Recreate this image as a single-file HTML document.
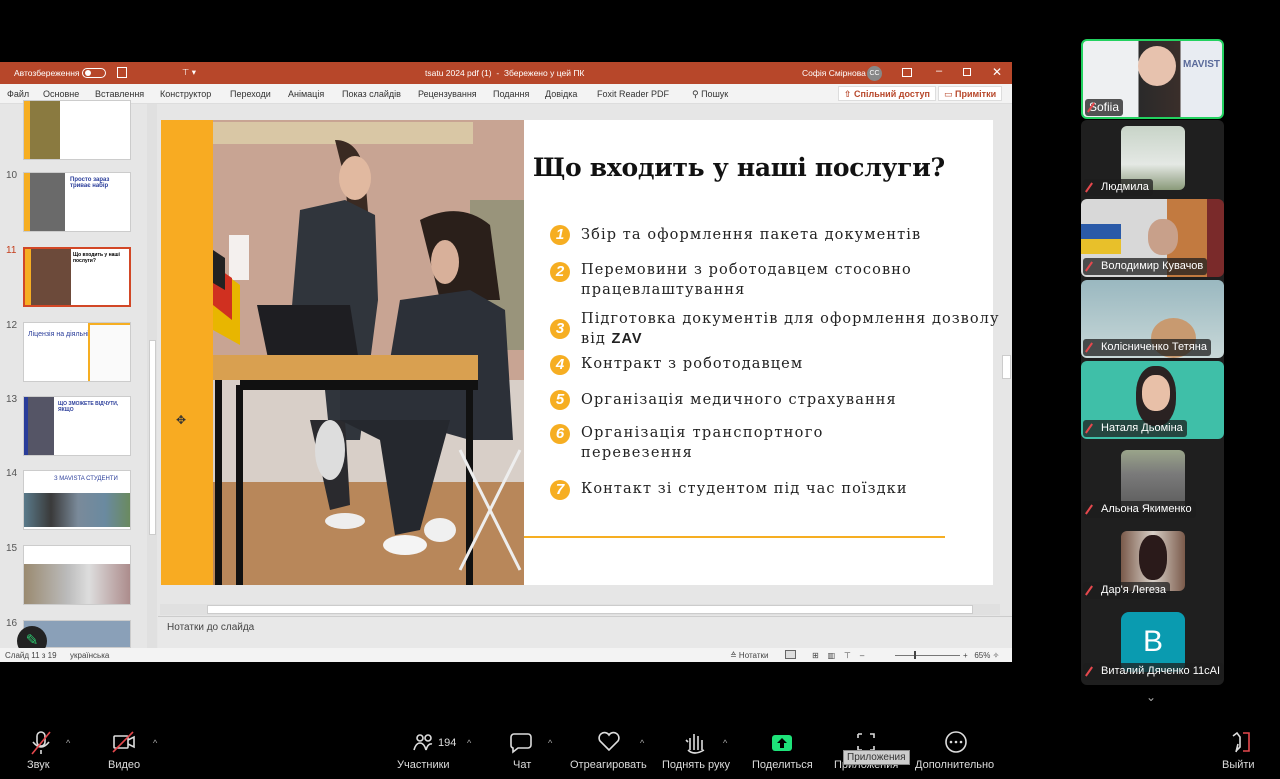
<!DOCTYPE html>
<html><head><meta charset="utf-8">
<style>
*{margin:0;padding:0;box-sizing:border-box}
body{width:1280px;height:779px;background:#000;position:relative;overflow:hidden;font-family:"Liberation Sans","DejaVu Sans",sans-serif}
.a{position:absolute}
.tb{left:0;top:62px;width:1012px;height:22px;background:#b7472a;color:#fff;font-size:8.5px}
.rb{left:0;top:84px;width:1012px;height:20px;background:#f3f3f3;font-size:9px;color:#333;border-bottom:1px solid #ddd}
.rb span{position:absolute;top:5px}
.main{left:0;top:104px;width:1012px;height:544px;background:#e6e6e6}
.thumb{position:absolute;left:23px;width:108px;height:60px;background:#fff;border:1px solid #ccc;overflow:hidden}
.num{position:absolute;left:6px;font-size:10px;color:#555}
.slide{left:161px;top:120px;width:832px;height:465px;background:#fff}
.li{position:absolute;left:581px;font-family:"DejaVu Serif","Liberation Serif",serif;font-size:14.5px;color:#222;letter-spacing:1.1px;line-height:20px}
.bul{position:absolute;left:550px;width:20px;height:20px;border-radius:50%;background:#f6ae22;color:#fff;font:bold italic 15px "Liberation Sans",sans-serif;text-align:center;line-height:20px}
.tile{position:absolute;left:1081px;width:143px;height:78px;background:#222;border-radius:6px;overflow:hidden}
.nm{position:absolute;left:2px;bottom:2px;height:17px;padding:0 4px 0 18px;background:rgba(30,30,30,.75);color:#fff;font-size:11px;line-height:17px;border-radius:3px;white-space:nowrap}
.nm:before{content:"";position:absolute;left:5px;top:3px;width:2px;height:11px;background:#e5484d;transform:rotate(35deg)}
.tl{position:absolute;color:#ddd;font-size:11px;top:759px;text-align:center}
</style></head><body>

<div class="a tb">
 <span class="a" style="left:14px;top:6px">Автозбереження</span>
 <span class="a" style="left:82px;top:6px;width:24px;height:10px;border:1px solid #fff;border-radius:6px"></span>
 <span class="a" style="left:85px;top:8px;width:6px;height:6px;border-radius:50%;background:#fff"></span>
 <span class="a" style="left:117px;top:5px;width:10px;height:11px;border:1px solid #fff"></span>
 <span class="a" style="left:182px;top:5px">⊤ ▾</span>
 <span class="a" style="left:425px;top:6px">tsatu 2024 pdf (1) &nbsp;-&nbsp; Збережено у цей ПК</span>
 <span class="a" style="left:802px;top:6px">Софія Смірнова</span>
 <span class="a" style="left:867px;top:4px;width:15px;height:15px;border-radius:50%;background:#888;font-size:7px;text-align:center;line-height:15px">СС</span>
 <span class="a" style="left:902px;top:6px;width:10px;height:9px;border:1px solid #fff"></span>
 <span class="a" style="left:936px;top:3px;font-size:11px">–</span>
 <span class="a" style="left:963px;top:6px;width:8px;height:8px;border:1px solid #fff"></span>
 <span class="a" style="left:992px;top:3px;font-size:12px">✕</span>
</div>
<div class="a rb">
 <span style="left:7px">Файл</span><span style="left:43px">Основне</span><span style="left:95px">Вставлення</span><span style="left:160px">Конструктор</span><span style="left:230px">Переходи</span><span style="left:288px">Анімація</span><span style="left:342px">Показ слайдів</span><span style="left:418px">Рецензування</span><span style="left:493px">Подання</span><span style="left:545px">Довідка</span><span style="left:597px">Foxit Reader PDF</span><span style="left:692px">⚲ Пошук</span>
 <span style="left:838px;top:2px;height:15px;padding:2px 5px;background:#fff;border:1px solid #ddd;color:#b7472a;font-weight:bold">⇧ Спільний доступ</span>
 <span style="left:938px;top:2px;height:15px;padding:2px 5px;background:#fff;border:1px solid #ddd;color:#b7472a;font-weight:bold">▭ Примітки</span>
</div>

<div class="a main"></div>
<div class="a" style="left:147px;top:104px;width:10px;height:544px;background:#e0e0e0"></div>
<div class="a" style="left:149px;top:340px;width:7px;height:195px;background:#fff;border:1px solid #ccc"></div>
<div class="thumb" style="top:100px"><div class="a" style="left:0;top:0;width:6px;height:60px;background:#f6ae22"></div><div class="a" style="left:6px;top:0;width:30px;height:60px;background:#8a7a40"></div></div>
<div class="num" style="top:170px">10</div>
<div class="thumb" style="top:172px"><div class="a" style="left:0;top:0;width:6px;height:60px;background:#f6ae22"></div><div class="a" style="left:6px;top:0;width:35px;height:60px;background:#6a6a6a"></div><div class="a" style="left:46px;top:4px;font-size:6px;color:#2a3d9a;font-weight:bold">Просто зараз триває набір</div></div>
<div class="num" style="top:245px;color:#c43e1c">11</div>
<div class="thumb" style="top:247px;border:2px solid #d24726"><div class="a" style="left:0;top:0;width:6px;height:60px;background:#f6ae22"></div><div class="a" style="left:6px;top:0;width:40px;height:60px;background:#6c4a3a"></div><div class="a" style="left:48px;top:3px;font-size:5px;font-weight:bold">Що входить у наші послуги?</div></div>
<div class="num" style="top:320px">12</div>
<div class="thumb" style="top:322px"><div class="a" style="left:4px;top:8px;font-size:7px;color:#2a3d9a">Ліцензія на діяльність Mavista</div><div class="a" style="left:64px;top:0;width:44px;height:60px;border:2px solid #f6ae22;background:#fafafa"></div></div>
<div class="num" style="top:394px">13</div>
<div class="thumb" style="top:396px"><div class="a" style="left:0;top:0;width:4px;height:60px;background:#2a3d9a"></div><div class="a" style="left:4px;top:0;width:26px;height:60px;background:#556"></div><div class="a" style="left:34px;top:4px;font-size:5px;color:#2a3d9a;font-weight:bold">ЩО ЗМОЖЕТЕ ВІДЧУТИ, ЯКЩО</div></div>
<div class="num" style="top:468px">14</div>
<div class="thumb" style="top:470px"><div class="a" style="left:30px;top:5px;font-size:6px;color:#2a3d9a">З MAVISTA СТУДЕНТИ</div><div class="a" style="left:0;top:22px;width:108px;height:34px;background:linear-gradient(90deg,#5a7a8a,#3a3a3a,#7a8a9a,#6a8aa0,#6a8a5a)"></div></div>
<div class="num" style="top:543px">15</div>
<div class="thumb" style="top:545px"><div class="a" style="left:0;top:18px;width:108px;height:42px;background:linear-gradient(90deg,#9a8a70,#bbb 40%,#ddd 60%,#a88)"></div></div>
<div class="num" style="top:618px">16</div>
<div class="thumb" style="top:620px;height:28px;background:#8aa0b8"></div>
<div class="a" style="left:17px;top:626px;width:30px;height:30px;border-radius:50%;background:#222;color:#2ecc71;font-size:15px;text-align:center;line-height:30px">✎</div>

<div class="a slide"></div>
<div class="a" style="left:161px;top:120px;width:52px;height:465px;background:#f8ab22"></div>
<svg class="a" style="left:213px;top:120px" width="311" height="465" viewBox="213 120 311 465">
 <rect x="213" y="120" width="311" height="465" fill="#c8a493"/>
 <rect x="213" y="380" width="311" height="120" fill="#d8cfc8"/>
 <rect x="213" y="482" width="311" height="103" fill="#b8875a"/>
 <rect x="213" y="122" width="260" height="22" fill="#d9c7a5"/>
 <rect x="470" y="200" width="54" height="150" fill="#7a8a6a" opacity=".6"/>
 <rect x="229" y="235" width="20" height="45" fill="#f4f0ee"/>
 <path d="M213 265 L240 285 L240 345 L213 330Z" fill="#e8b600"/>
 <path d="M213 265 L232 278 L232 320 L213 305Z" fill="#d03020"/>
 <path d="M213 250 L225 258 L225 290 L213 283Z" fill="#222"/>
 <path d="M335 140 Q360 140 365 175 L372 260 L352 260 L345 180Z" fill="#3a2a22"/>
 <ellipse cx="355" cy="178" rx="16" ry="22" fill="#e1b9a0"/>
 <path d="M300 210 L345 200 L375 215 L378 300 L360 440 L330 440 L320 340 L290 330 Z" fill="#30353c"/>
 <path d="M310 420 L345 420 L350 505 L330 510Z" fill="#2a2a2e"/>
 <ellipse cx="330" cy="450" rx="15" ry="30" fill="#ddd"/>
 <ellipse cx="345" cy="521" rx="20" ry="8" fill="#eee"/>
 <path d="M420 220 Q460 200 490 225 L500 300 L440 300Z" fill="#2a1f1a"/>
 <ellipse cx="445" cy="262" rx="14" ry="22" fill="#d8b09a"/>
 <path d="M400 300 L470 290 L505 310 L513 440 L470 440 L400 420 L340 420 L340 380 L390 360Z" fill="#2c3038"/>
 <path d="M340 420 L450 420 L420 530 L395 535 L380 440 Z" fill="#25282e"/>
 <ellipse cx="405" cy="545" rx="22" ry="10" fill="#f4f4f4"/>
 <ellipse cx="440" cy="530" rx="16" ry="12" fill="#f0f0f0"/>
 <path d="M257 305 L350 305 L360 368 L270 368Z" fill="#1e1e22"/>
 <rect x="213" y="355" width="265" height="25" fill="#d9a050"/>
 <rect x="240" y="380" width="238" height="10" fill="#111"/>
 <rect x="215" y="380" width="7" height="205" fill="#111"/>
 <rect x="236" y="385" width="7" height="200" fill="#111"/>
 <rect x="466" y="385" width="7" height="200" fill="#111"/>
 <path d="M460 450 L520 570 M520 450 L460 570" stroke="#eee" stroke-width="3"/>
</svg>
<div class="a" style="left:176px;top:413px;font-size:12px;color:#333">✥</div>

<div class="a" style="left:533px;top:153px;font-family:'DejaVu Serif','Liberation Serif',serif;font-weight:bold;font-size:25px;color:#111;letter-spacing:-0.3px">Що входить у наші послуги?</div>
<div class="bul" style="top:225px">1</div><div class="li" style="top:225px">Збір та оформлення пакета документів</div>
<div class="bul" style="top:262px">2</div><div class="li" style="top:260px">Перемовини з роботодавцем стосовно<br>працевлаштування</div>
<div class="bul" style="top:319px">3</div><div class="li" style="top:309px;width:430px;letter-spacing:1.05px">Підготовка документів для оформлення дозволу<br>від <b style="font-family:'Liberation Sans',sans-serif">ZAV</b></div>
<div class="bul" style="top:355px">4</div><div class="li" style="top:354px">Контракт з роботодавцем</div>
<div class="bul" style="top:390px">5</div><div class="li" style="top:390px">Організація медичного страхування</div>
<div class="bul" style="top:424px">6</div><div class="li" style="top:423px;letter-spacing:1.3px">Організація транспортного<br>перевезення</div>
<div class="bul" style="top:480px">7</div><div class="li" style="top:479px">Контакт зі студентом під час поїздки</div>
<div class="a" style="left:524px;top:536px;width:421px;height:2px;background:#f6ae22"></div>

<div class="a" style="left:1000px;top:104px;width:12px;height:500px;background:#e6e6e6"></div>
<div class="a" style="left:1002px;top:355px;width:9px;height:24px;background:#fff;border:1px solid #ccc"></div>
<div class="a" style="left:160px;top:604px;width:840px;height:11px;background:#e0e0e0"></div>
<div class="a" style="left:207px;top:605px;width:766px;height:9px;background:#fff;border:1px solid #ccc"></div>
<div class="a" style="left:158px;top:616px;width:854px;height:32px;background:#e8e8e8;border-top:1px solid #ccc"></div>
<div class="a" style="left:167px;top:622px;font-size:10px;color:#444">Нотатки до слайда</div>
<div class="a" style="left:0;top:648px;width:1012px;height:14px;background:#f3f3f3;font-size:8px;color:#444">
 <span class="a" style="left:5px;top:3px">Слайд 11 з 19</span><span class="a" style="left:70px;top:3px">українська</span>
 <span class="a" style="left:730px;top:3px">≙ Нотатки</span>
 <span class="a" style="left:785px;top:2px;width:11px;height:9px;border:1px solid #666;background:#ddd"></span>
 <span class="a" style="left:812px;top:3px">⊞ &nbsp;&nbsp; ▥ &nbsp;&nbsp; ⊤ &nbsp;&nbsp; –</span>
 <span class="a" style="left:895px;top:7px;width:65px;height:1px;background:#777"></span>
 <span class="a" style="left:914px;top:3px;width:2px;height:8px;background:#444"></span>
 <span class="a" style="left:963px;top:3px">+ &nbsp; 65% ✧</span>
</div>

<div class="a" style="left:1081px;top:120px;width:143px;height:565px;background:#1f1f1f;border-radius:6px"></div>
<div class="tile" style="top:39px;height:80px;border:2px solid #23d160;background:linear-gradient(90deg,#eef0f2 40%,#2a2a2a 40%,#3a2e2a 70%,#e8ecf2 70%)">
 <div class="a" style="left:55px;top:5px;width:38px;height:40px;border-radius:50%;background:#e7c2ae"></div>
 <div class="a" style="left:100px;top:18px;font-size:10px;color:#5a6a9a;font-weight:bold">MAVIST</div>
 <div class="nm" style="padding-left:4px;left:2px;bottom:1px;font-size:12px">Sofiia</div>
</div>
<div class="tile" style="top:120px;background:transparent"><div class="a" style="left:40px;top:6px;width:64px;height:64px;border-radius:6px;background:linear-gradient(#c8d4c8,#e4e8e4 60%,#8a9a7a)"></div><div class="nm">Людмила</div></div>
<div class="tile" style="top:199px;background:linear-gradient(90deg,#d8d8d8 0,#d8d8d8 60%,#c27a40 60%,#c27a40 88%,#7a2a2a 88%)"><div class="a" style="left:0;top:25px;width:40px;height:30px;background:linear-gradient(#2a5aa8 50%,#e8c02a 50%)"></div><div class="a" style="left:67px;top:20px;width:30px;height:36px;border-radius:45%;background:#c8a08a"></div><div class="nm">Володимир Кувачов</div></div>
<div class="tile" style="top:280px;background:linear-gradient(#9ab8c0,#c8d8d8)"><div class="a" style="left:70px;top:38px;width:45px;height:40px;border-radius:50%;background:#c89a70"></div><div class="nm">Колісниченко Тетяна</div></div>
<div class="tile" style="top:361px;background:#3fbfa8"><div class="a" style="left:55px;top:5px;width:40px;height:60px;border-radius:45%;background:#2a2222"></div><div class="a" style="left:61px;top:14px;width:28px;height:36px;border-radius:45%;background:#e8c0a8"></div><div class="nm">Наталя Дьоміна</div></div>
<div class="tile" style="top:442px;background:transparent"><div class="a" style="left:40px;top:8px;width:64px;height:60px;border-radius:6px;background:linear-gradient(#9aa48a,#7a7a7a 40%,#5a5a5a)"></div><div class="nm">Альона Якименко</div></div>
<div class="tile" style="top:523px;background:transparent"><div class="a" style="left:40px;top:8px;width:64px;height:60px;border-radius:6px;background:linear-gradient(90deg,#7a5a4a,#d8d0c8,#7a5a4a)"></div><div class="a" style="left:58px;top:12px;width:28px;height:45px;border-radius:45%;background:#2a1a1a"></div><div class="nm">Дар'я Легеза</div></div>
<div class="tile" style="top:604px;background:transparent"><div class="a" style="left:40px;top:8px;width:64px;height:60px;border-radius:8px;background:#0a9bb0;color:#fff;font-size:30px;text-align:center;line-height:60px">B</div><div class="nm">Виталий Дяченко 11cAI</div></div>
<div class="a" style="left:1146px;top:690px;color:#aaa;font-size:12px">⌄</div>

<div class="a" style="left:0;top:722px;width:1280px;height:57px;background:#000"></div>
<svg class="a" style="left:0;top:728px" width="1280" height="30">
 <g stroke="#ddd" stroke-width="1.6" fill="none">
  <rect x="37" y="4" width="8" height="14" rx="4"/><path d="M33 14 q8 10 16 0 M41 22v4"/>
  <path d="M32 26 L50 4" stroke="#e5484d"/>
  <rect x="114" y="8" width="14" height="12" rx="1"/><path d="M128 12 l6 -3 v10 l-6 -3"/><path d="M113 24 L133 4" stroke="#e5484d"/>
  <circle cx="420" cy="10" r="3"/><circle cx="428" cy="10" r="3"/><path d="M414 22 q2-7 6-7 q4 0 6 7 M426 22 q2-7 6-6"/>
  <path d="M514 6 h14 a3 3 0 0 1 3 3 v8 a3 3 0 0 1 -3 3 h-10 l-5 4 v-4 a3 3 0 0 1 -2 -3 v-8 a3 3 0 0 1 3 -3z"/>
  <path d="M609 22 l-9 -9 a5 5 0 0 1 9 -6 a5 5 0 0 1 9 6z"/>
  <path d="M690 22 v-12 m4 12 v-16 m4 16 v-14 m4 14 v-10 M688 14 l-2 -2 M688 22 q6 6 16 0"/>
  <path d="M858 6 h4 m8 0 h4 v4 m0 8 v4 h-4 m-8 0 h-4 v-4 m0 -8 v-4"/>
  <circle cx="956" cy="14" r="10"/>
  <path d="M1233 8 l4 -3 l3 4 v10 l-4 4 M1236 24 l2 -8"/>
 </g>
 <rect x="772" y="7" width="20" height="16" rx="3" fill="#1ee37a"/>
 <path d="M782 10 l-5 5 h3 v5 h4 v-5 h3z" fill="#000"/>
 <path d="M1243 5 h6 v18 h-6" stroke="#e5484d" fill="none" stroke-width="1.6"/>
 <g fill="#ddd"><circle cx="951" cy="14" r="1.3"/><circle cx="956" cy="14" r="1.3"/><circle cx="961" cy="14" r="1.3"/></g>
 <g fill="#aaa" font-size="9" font-family="Liberation Sans"><text x="66" y="18">^</text><text x="153" y="18">^</text><text x="467" y="18">^</text><text x="548" y="18">^</text><text x="640" y="18">^</text><text x="723" y="18">^</text></g>
 <text x="438" y="18" fill="#ddd" font-size="11" font-family="Liberation Sans">194</text>
</svg>
<div class="tl" style="left:27px">Звук</div>
<div class="tl" style="left:108px">Видео</div>
<div class="tl" style="left:397px">Участники</div>
<div class="tl" style="left:513px">Чат</div>
<div class="tl" style="left:570px">Отреагировать</div>
<div class="tl" style="left:662px">Поднять руку</div>
<div class="tl" style="left:752px">Поделиться</div>
<div class="tl" style="left:834px">Приложения</div>
<div class="tl" style="left:915px">Дополнительно</div>
<div class="tl" style="left:1222px">Выйти</div>
<div class="a" style="left:843px;top:750px;padding:1px 3px;background:#ccc;color:#333;font-size:10px;border:1px solid #888">Приложения</div>
</body></html>
